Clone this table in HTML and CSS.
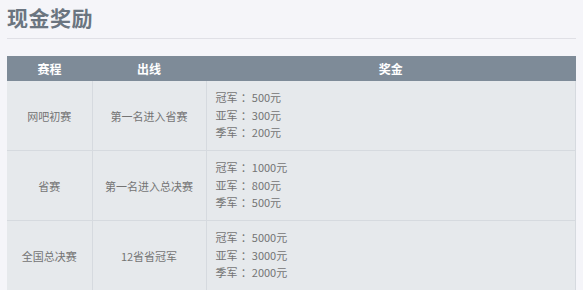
FILE: index.html
```html
<!DOCTYPE html>
<html lang="zh-CN">
<head>
<meta charset="utf-8">
<link rel="stylesheet" href="styles.css">
</head>
<body>
<div class="page">
  <h2 class="title">现金奖励</h2>
  <div class="divider"></div>
  <table class="prize">
    <thead>
      <tr>
        <th class="c1">赛程</th>
        <th class="c2">出线</th>
        <th class="c3">奖金</th>
      </tr>
    </thead>
    <tbody>
      <tr>
        <td class="c1">网吧初赛</td>
        <td class="c2">第一名进入省赛</td>
        <td class="c3"><div>冠军<span class="colon">：</span>500元</div><div>亚军<span class="colon">：</span>300元</div><div>季军<span class="colon">：</span>200元</div></td>
      </tr>
      <tr>
        <td class="c1">省赛</td>
        <td class="c2">第一名进入总决赛</td>
        <td class="c3"><div>冠军<span class="colon">：</span>1000元</div><div>亚军<span class="colon">：</span>800元</div><div>季军<span class="colon">：</span>500元</div></td>
      </tr>
      <tr>
        <td class="c1">全国总决赛</td>
        <td class="c2">12省省冠军</td>
        <td class="c3"><div>冠军<span class="colon">：</span>5000元</div><div>亚军<span class="colon">：</span>3000元</div><div>季军<span class="colon">：</span>2000元</div></td>
      </tr>
    </tbody>
  </table>
</div>
</body>
</html>
```
FILE: styles.css
```css
html, body {
  margin: 0;
  padding: 0;
  background: #f5f5f9;
}
body {
  font-family: "Noto Sans CJK SC", "Noto Sans", sans-serif;
  overflow: hidden;
}
.page {
  width: 569px;
  padding: 2px 0 0 7px;
}
.title {
  margin: 0;
  font-size: 21px;
  line-height: 30px;
  font-weight: 700;
  color: #6b7580;
  letter-spacing: 0.5px;
}
.divider {
  margin-top: 6px;
  height: 1px;
  background: #e0e0e6;
}
.prize {
  margin-top: 17px;
  width: 569px;
  border-collapse: collapse;
  table-layout: fixed;
}
.prize th {
  height: 25px;
  padding: 0;
  background: #7e8b98;
  color: #ffffff;
  font-size: 12px;
  font-weight: 700;
  text-align: center;
  line-height: 25px;
}
.prize .c1 { width: 85px; }
.prize .c2 { width: 114px; }
.prize td {
  height: 69px;
  padding: 0;
  background: #e6e9ec;
  color: #747474;
  font-size: 11px;
  text-align: center;
  vertical-align: middle;
  border-right: 1px solid #d6dadf;
  border-bottom: 1px solid #d6dadf;
}
.prize td.c3 {
  text-align: left;
  padding-left: 9px;
  line-height: 17.5px;
}
.colon {
  padding-left: 0.3em;
}
```
